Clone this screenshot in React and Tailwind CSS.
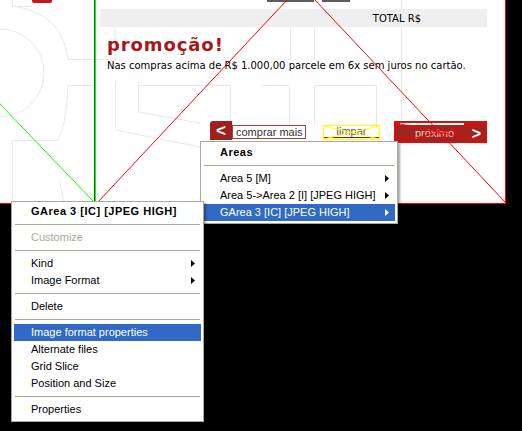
const areasMenu = [
  { type: "title", label: "Areas" },
  { type: "sep" },
  { label: "Area 5 [M]", sub: true },
  { label: "Area 5->Area 2 [I] [JPEG HIGH]", sub: true },
  { label: "GArea 3 [IC] [JPEG HIGH]", sub: true, active: true },
];

const sliceMenu = [
  { type: "title", label: "GArea 3 [IC] [JPEG HIGH]" },
  { type: "sep" },
  { label: "Customize", disabled: true },
  { type: "sep" },
  { label: "Kind", sub: true },
  { label: "Image Format", sub: true },
  { type: "sep" },
  { label: "Delete" },
  { type: "sep" },
  { label: "Image format properties", active: true },
  { label: "Alternate files" },
  { label: "Grid Slice" },
  { label: "Position and Size" },
  { type: "sep" },
  { label: "Properties" },
];

function Arrow({ white }) {
  return (
    <svg width="4" height="7" viewBox="0 0 4 7" className="ml-auto shrink-0">
      <polygon points="0,0 4,3.5 0,7" fill={white ? "#fff" : "#000"} />
    </svg>
  );
}

function Menu({ items, className }) {
  return (
    <div className={"absolute bg-white border border-[#aca899] px-[2px] shadow-[2px_2px_2px_rgba(0,0,0,0.35)] text-[11px] text-black font-['Liberation_Sans',Arial,sans-serif] " + className}>
      {items.map((it, i) => {
        if (it.type === "sep")
          return (
            <div key={i} className="h-[9px] pt-[4px] px-[1px]">
              <div className="h-[1px] bg-[#aca899]" />
            </div>
          );
        if (it.type === "title")
          return (
            <div key={i} className="h-[17px] flex items-center pl-[17px] font-bold tracking-[0.5px]">
              {it.label}
            </div>
          );
        return (
          <div key={i}
            className={"h-[17px] flex items-center pl-[17px] pr-[6px] whitespace-nowrap " +
              (it.active ? "bg-[#316ac5] text-white" : it.disabled ? "text-[#aca899]" : "")}>
            {it.label}
            {it.sub && <Arrow white={it.active} />}
          </div>
        );
      })}
    </div>
  );
}

function Watermark() {
  return (
    <svg className="absolute inset-0" width="505" height="203" fill="none" stroke="#e8e8e8" strokeWidth="1">
      <path d="M12.5,0 V6.5 H32" />
      <path d="M12,6 Q62,12 68,59.5 H115" />
      <path d="M0,29 A44,44 0 0 1 0,117" />
      <path d="M115,27 V59.5" />
      <path d="M95,85.5 H68 C67,110 64,128 58,140.5 H12.5 V203" />
      <path d="M60,183 L64,203" />
      <path d="M115.5,83 V130 L200,147" />
      <path d="M138.5,83 V112 L200,123" />
      <path d="M138,85.5 H230.5 V133" />
      <path d="M261,85.5 H289.5 V125" />
      <path d="M314.5,125 V85.5 H376.5 V125" />
      <path d="M290.5,27 V60 M314.5,27 V60" />
      <path d="M401.5,0 V140" />
    </svg>
  );
}

function Overlay() {
  return (
    <svg className="absolute inset-0 pointer-events-none" width="505" height="203" fill="none">
      <line x1="94.5" y1="0" x2="94.5" y2="203" stroke="#007000" />
      <line x1="95.5" y1="0" x2="95.5" y2="203" stroke="#00ff00" />
      <line x1="0" y1="104" x2="93" y2="201" stroke="#00ff00" />
      <line x1="97" y1="203" x2="287" y2="0" stroke="#ff0000" />
      <line x1="315" y1="0" x2="505" y2="202" stroke="#ff0000" />
      <rect x="323.5" y="125.5" width="56" height="14" stroke="#ffff00" />
      <line x1="324" y1="126" x2="379" y2="139" stroke="#ffff00" />
      <line x1="324" y1="139" x2="379" y2="126" stroke="#ffff00" />
      <rect x="394.5" y="122.5" width="92" height="20" stroke="#ff0000" />
      <line x1="395" y1="123" x2="486" y2="142" stroke="#ff0000" />
      <line x1="395" y1="142" x2="486" y2="123" stroke="#ff0000" />
    </svg>
  );
}

function Canvas() {
  return (
    <div className="relative w-[506px] h-[204px] bg-white border-r border-b border-[#ff0000] overflow-hidden font-['DejaVu_Sans',Verdana,sans-serif]">
      <Watermark />
      <div className="relative flex h-full">
        {/* left column */}
        <div className="w-[100px] shrink-0">
          <div className="ml-[32px] w-[20px] h-[3px] bg-[#c4161c] rounded-b-[2px]" />
        </div>

        {/* page body */}
        <div className="flex-1 flex flex-col">
          <div className="flex h-[2px]">
            <div className="ml-[167px] w-[47px] bg-[#5c5c5c]" />
            <div className="ml-[8px] w-[28px] bg-[#5c5c5c]" />
          </div>
          <div className="mt-[7px] h-[18px] w-[387px] bg-[#efefef] flex items-center justify-end pr-[66px] text-[10px] text-black">
            TOTAL R$
          </div>
          <div className="mt-[7px] pl-[7px] text-[18px] font-bold leading-[22px] tracking-[0.9px] text-[#a8151b]">
            promoção!
          </div>
          <div className="mt-[4px] pl-[7px] text-[10px] leading-[12px] text-black">
            Nas compras acima de R$ 1.000,00 parcele em 6x sem juros no cartão.
          </div>

          <div className="mt-[49px] pl-[110px] flex items-start font-['Liberation_Sans',Arial,sans-serif] text-[11px]">
            <div className="w-[22px] h-[19px] bg-[#9e2121] rounded-tl-[3px] flex items-center justify-center text-white font-bold text-[17px] leading-none">
              &lt;
            </div>
            <div className="mt-[4px] w-[74px] h-[14px] border border-[#a8403f] flex items-center pl-[3px] text-[#333]">
              comprar mais
            </div>
            <div className="ml-[17px] mt-[3px] w-[57px] h-[15px] p-[1px]">
              <div className="h-full border-b border-[#7a1f1f] flex items-center justify-center text-[#555]">
                limpar
              </div>
            </div>
            <div className="ml-[14px] w-[93px] h-[21px] bg-[#a3231f] flex flex-col">
              <div className="mx-[6px] mt-[2px] h-[2px] w-[64px] bg-white" />
              <div className="flex-1 flex items-center pl-[21px] pr-[6px] text-[#e0d0d0]">
                próximo
                <span className="ml-auto text-white font-bold text-[16px] leading-none">&gt;</span>
              </div>
            </div>
          </div>
        </div>
      </div>
      <Overlay />
    </div>
  );
}

export default function App() {
  return (
    <div className="relative w-[522px] h-[431px] bg-black overflow-hidden">
      <Canvas />
      <Menu items={areasMenu} className="left-[200px] top-[141px] w-[198px] pt-[2px] pb-[2px]" />
      <Menu items={sliceMenu} className="left-[11px] top-[201px] w-[193px] pt-[1px] pb-[3px]" />
    </div>
  );
}
